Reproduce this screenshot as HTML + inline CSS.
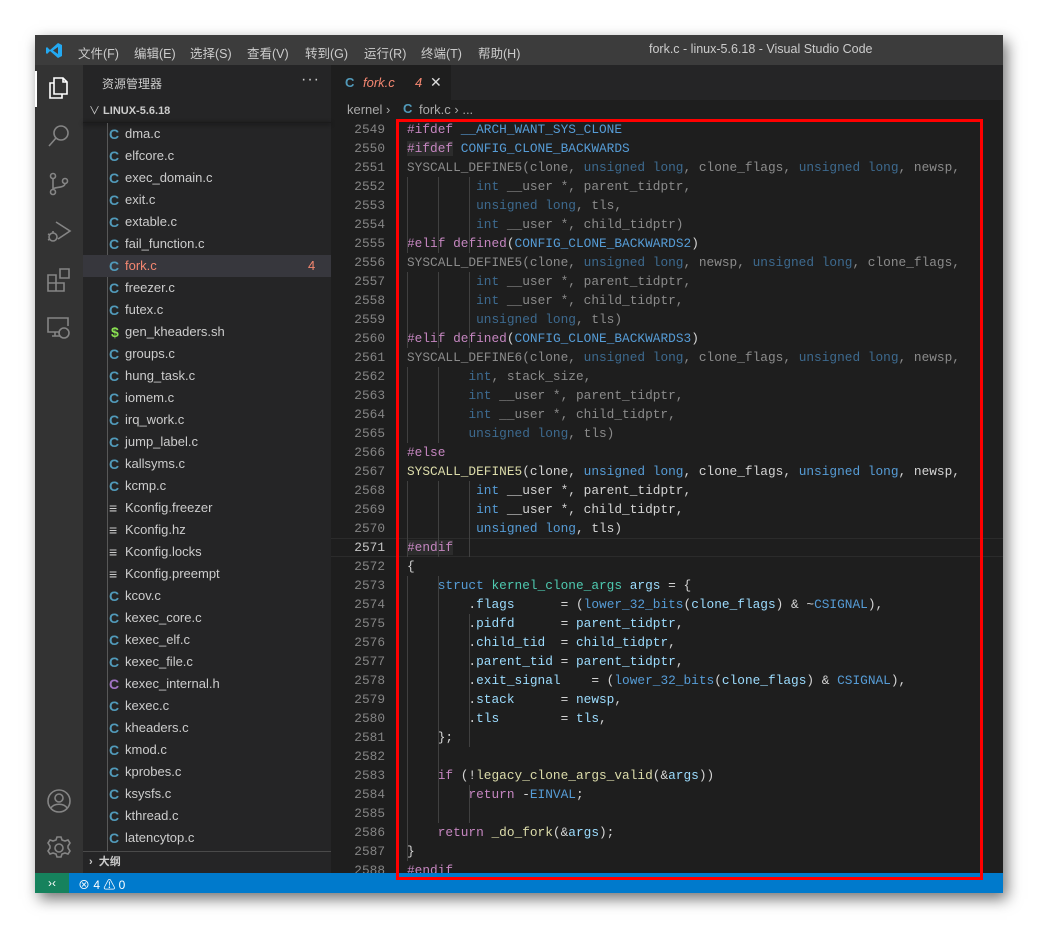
<!DOCTYPE html>
<html><head><meta charset="utf-8"><style>
*{margin:0;padding:0;box-sizing:border-box}
body{width:1038px;height:930px;background:#fff;position:relative;overflow:hidden;font-family:"Liberation Sans","Noto Sans CJK SC",sans-serif}
#win{position:absolute;left:35px;top:35px;width:968px;height:858px;background:#1e1e1e;box-shadow:4px 6px 14px rgba(0,0,0,.55);overflow:hidden}
.abs{position:absolute}
#title{left:0;top:0;width:968px;height:30px;background:#3c3c3c;color:#ccc;font-size:12.5px}
#title span{position:absolute;top:8px}
#act{left:0;top:30px;width:48px;height:808px;background:#333}
#side{left:48px;top:30px;width:248px;height:808px;background:#252526;color:#ccc;font-size:13px}
.f{position:absolute;left:0;width:248px;height:22px;line-height:22px}
.f i{position:absolute;left:26px;font-style:normal;font-weight:bold;font-size:14px;color:#519aba}
.f b{position:absolute;left:42px;font-weight:normal}
#tabs{left:296px;top:30px;width:672px;height:35px;background:#252526}
#crumb{left:296px;top:65px;width:672px;height:20px;color:#a9a9a9;font-size:13px}
#code{left:296px;top:85px;width:672px;height:753px;font-family:"Liberation Mono",monospace;font-size:12.8px;color:#d4d4d4}
.l{height:19px;line-height:19px;white-space:pre;position:relative}
.n{position:absolute;left:0;width:54px;text-align:right;color:#858585}
.c{position:absolute;left:76px}
.p{color:#c586c0}.m{color:#569cd6}.k{color:#569cd6}.fn{color:#dcdcaa}.t{color:#4ec9b0}.v{color:#9cdcfe}
.d{color:#8b8b8b}.d .k{color:#3d6a8f}.d .m{color:#3d6a8f}
.g{position:absolute;top:0;width:1px;height:19px;background:#404040}
#status{left:0;top:838px;width:968px;height:20px;background:#007acc;color:#fff;font-size:12px}
</style></head><body>
<div id="win">
<div id="title" class="abs">
<svg class="abs" style="left:10px;top:7px" width="18" height="17" viewBox="0 0 18 17"><path d="M13 1 L17 3 V14 L13 16 L5 9 L2 12 L1 11 V6 L2 5 L5 8 Z M13 5 L8 8.5 L13 12 Z" fill="#23a9f2"/></svg>
<span style="left:43px">文件(F)</span><span style="left:99px">编辑(E)</span><span style="left:155px">选择(S)</span><span style="left:212px">查看(V)</span><span style="left:270px">转到(G)</span><span style="left:329px">运行(R)</span><span style="left:386px">终端(T)</span><span style="left:443px">帮助(H)</span>
<span style="left:614px;font-size:12.5px;top:7px">fork.c - linux-5.6.18 - Visual Studio Code</span>
</div>
<div id="act" class="abs">
<div class="abs" style="left:0;top:6px;width:2px;height:36px;background:#fff"></div>
<svg class="abs" style="left:11px;top:10px" width="26" height="26" viewBox="0 0 26 26" fill="none" stroke="#fff" stroke-width="1.6"><path d="M8 3h9l4 4v12H8z M17 3v4h4"/><path d="M8 8H4v15h12v-4"/></svg>
<svg class="abs" style="left:11px;top:58px" width="26" height="26" viewBox="0 0 26 26" fill="none" stroke="#858585" stroke-width="1.6"><circle cx="15" cy="10" r="7"/><path d="M10 15 L3 23"/></svg>
<svg class="abs" style="left:11px;top:106px" width="26" height="26" viewBox="0 0 26 26" fill="none" stroke="#858585" stroke-width="1.6"><circle cx="7" cy="5" r="2.5"/><circle cx="7" cy="21" r="2.5"/><circle cx="19" cy="10" r="2.5"/><path d="M7 7.5v11 M19 12.5c0 5-12 3-12 6"/></svg>
<svg class="abs" style="left:11px;top:154px" width="26" height="26" viewBox="0 0 26 26" fill="none" stroke="#858585" stroke-width="1.6"><path d="M10 3 L24 12 L12 20"/><circle cx="7" cy="18" r="4"/><path d="M2 15l2 1M2 21l2-1M7 14v-2"/></svg>
<svg class="abs" style="left:11px;top:202px" width="26" height="26" viewBox="0 0 26 26" fill="none" stroke="#858585" stroke-width="1.6"><path d="M2 8h8v8h8v8H2z M2 16h8v8 M14 2h9v9h-9z"/></svg>
<svg class="abs" style="left:11px;top:250px" width="26" height="26" viewBox="0 0 26 26" fill="none" stroke="#858585" stroke-width="1.6"><path d="M14 17H2V3h20v8 M6 21h8 M9 17v4"/><circle cx="18" cy="18" r="5"/></svg>
<svg class="abs" style="left:11px;top:723px" width="26" height="26" viewBox="0 0 26 26" fill="none" stroke="#858585" stroke-width="1.6"><circle cx="13" cy="13" r="11"/><circle cx="13" cy="10" r="4"/><path d="M5 20c3-5 13-5 16 0"/></svg>
<svg class="abs" style="left:11px;top:770px" width="26" height="26" viewBox="0 0 26 26" fill="none" stroke="#858585" stroke-width="1.6"><circle cx="13" cy="13" r="4"/><path d="M11 2h4l1 3 3 1 3-1 2 3-2 3v2l2 3-2 3-3-1-3 1-1 3h-4l-1-3-3-1-3 1-2-3 2-3v-2L2 8l2-3 3 1 3-1z"/></svg>
</div>
<div id="side" class="abs">
<div class="abs" style="left:19px;top:10px;font-size:12px">资源管理器</div>
<div class="abs" style="left:218px;top:10px;font-size:16px;letter-spacing:1px;line-height:10px">···</div>
<div class="abs" style="left:6px;top:37px;font-size:11px;font-weight:bold"><span style="font-weight:normal">&#8744;</span> LINUX-5.6.18</div>
<div class="abs" style="left:0;top:57px;width:248px;height:1px;background:#1b1b1b;box-shadow:0 1px 4px #000"></div>
<div class="abs" style="left:24px;top:58px;width:1px;height:760px;background:#585858"></div>
<div class="f" style="top:58px"><i>C</i><b>dma.c</b></div>
<div class="f" style="top:80px"><i>C</i><b>elfcore.c</b></div>
<div class="f" style="top:102px"><i>C</i><b>exec_domain.c</b></div>
<div class="f" style="top:124px"><i>C</i><b>exit.c</b></div>
<div class="f" style="top:146px"><i>C</i><b>extable.c</b></div>
<div class="f" style="top:168px"><i>C</i><b>fail_function.c</b></div>
<div class="f" style="top:190px;background:#37373d"><i>C</i><b style="color:#f48771">fork.c</b><span style="position:absolute;left:225px;color:#f48771">4</span></div>
<div class="f" style="top:212px"><i>C</i><b>freezer.c</b></div>
<div class="f" style="top:234px"><i>C</i><b>futex.c</b></div>
<div class="f" style="top:256px"><i style="color:#89e051;left:28px">$</i><b>gen_kheaders.sh</b></div>
<div class="f" style="top:278px"><i>C</i><b>groups.c</b></div>
<div class="f" style="top:300px"><i>C</i><b>hung_task.c</b></div>
<div class="f" style="top:322px"><i>C</i><b>iomem.c</b></div>
<div class="f" style="top:344px"><i>C</i><b>irq_work.c</b></div>
<div class="f" style="top:366px"><i>C</i><b>jump_label.c</b></div>
<div class="f" style="top:388px"><i>C</i><b>kallsyms.c</b></div>
<div class="f" style="top:410px"><i>C</i><b>kcmp.c</b></div>
<div class="f" style="top:432px"><i style="color:#ccc;font-weight:normal">&#8801;</i><b>Kconfig.freezer</b></div>
<div class="f" style="top:454px"><i style="color:#ccc;font-weight:normal">&#8801;</i><b>Kconfig.hz</b></div>
<div class="f" style="top:476px"><i style="color:#ccc;font-weight:normal">&#8801;</i><b>Kconfig.locks</b></div>
<div class="f" style="top:498px"><i style="color:#ccc;font-weight:normal">&#8801;</i><b>Kconfig.preempt</b></div>
<div class="f" style="top:520px"><i>C</i><b>kcov.c</b></div>
<div class="f" style="top:542px"><i>C</i><b>kexec_core.c</b></div>
<div class="f" style="top:564px"><i>C</i><b>kexec_elf.c</b></div>
<div class="f" style="top:586px"><i>C</i><b>kexec_file.c</b></div>
<div class="f" style="top:608px"><i style="color:#a074c4">C</i><b>kexec_internal.h</b></div>
<div class="f" style="top:630px"><i>C</i><b>kexec.c</b></div>
<div class="f" style="top:652px"><i>C</i><b>kheaders.c</b></div>
<div class="f" style="top:674px"><i>C</i><b>kmod.c</b></div>
<div class="f" style="top:696px"><i>C</i><b>kprobes.c</b></div>
<div class="f" style="top:718px"><i>C</i><b>ksysfs.c</b></div>
<div class="f" style="top:740px"><i>C</i><b>kthread.c</b></div>
<div class="f" style="top:762px"><i>C</i><b>latencytop.c</b></div>
<div class="abs" style="left:0;top:786px;width:248px;height:22px;background:#252526;border-top:1px solid #4a4a4a;line-height:21px;font-size:11px;font-weight:bold;padding-left:6px">&#8250;&nbsp; 大纲</div>
</div>
<div id="tabs" class="abs">
<div class="abs" style="left:0;top:0;width:120px;height:35px;background:#1e1e1e;font-size:13px;line-height:35px">
<span style="position:absolute;left:14px;color:#519aba;font-weight:bold">C</span>
<span style="position:absolute;left:32px;color:#f48771;font-style:italic">fork.c</span>
<span style="position:absolute;left:84px;color:#f48771;font-style:italic">4</span>
<span style="position:absolute;left:99px;color:#ddd;font-size:14px">&#10005;</span></div>
</div>
<div id="crumb" class="abs"><span style="position:absolute;left:16px;top:2px">kernel &#8250;</span><span style="position:absolute;left:72px;top:1px;color:#519aba;font-weight:bold">C</span><span style="position:absolute;left:88px;top:2px">fork.c &#8250; ...</span></div>
<div id="code" class="abs">
<div class="l"><span class="n">2549</span><span class="c"><span class="p">#ifdef</span> <span class="m">__ARCH_WANT_SYS_CLONE</span></span></div>
<div class="l"><span class="n">2550</span><span class="c"><span class="p" style="background:#2c2c2c">#ifdef</span> <span class="m">CONFIG_CLONE_BACKWARDS</span></span></div>
<div class="l d"><span class="n">2551</span><span class="c">SYSCALL_DEFINE5(clone, <span class="k">unsigned</span> <span class="k">long</span>, clone_flags, <span class="k">unsigned</span> <span class="k">long</span>, newsp,</span></div>
<div class="l d"><span class="n">2552</span><span class="c">         <span class="k">int</span> __user *, parent_tidptr,</span></div>
<div class="l d"><span class="n">2553</span><span class="c">         <span class="k">unsigned</span> <span class="k">long</span>, tls,</span></div>
<div class="l d"><span class="n">2554</span><span class="c">         <span class="k">int</span> __user *, child_tidptr)</span></div>
<div class="l"><span class="n">2555</span><span class="c"><span class="p">#elif</span> <span class="p">defined</span>(<span class="m">CONFIG_CLONE_BACKWARDS2</span>)</span></div>
<div class="l d"><span class="n">2556</span><span class="c">SYSCALL_DEFINE5(clone, <span class="k">unsigned</span> <span class="k">long</span>, newsp, <span class="k">unsigned</span> <span class="k">long</span>, clone_flags,</span></div>
<div class="l d"><span class="n">2557</span><span class="c">         <span class="k">int</span> __user *, parent_tidptr,</span></div>
<div class="l d"><span class="n">2558</span><span class="c">         <span class="k">int</span> __user *, child_tidptr,</span></div>
<div class="l d"><span class="n">2559</span><span class="c">         <span class="k">unsigned</span> <span class="k">long</span>, tls)</span></div>
<div class="l"><span class="n">2560</span><span class="c"><span class="p">#elif</span> <span class="p">defined</span>(<span class="m">CONFIG_CLONE_BACKWARDS3</span>)</span></div>
<div class="l d"><span class="n">2561</span><span class="c">SYSCALL_DEFINE6(clone, <span class="k">unsigned</span> <span class="k">long</span>, clone_flags, <span class="k">unsigned</span> <span class="k">long</span>, newsp,</span></div>
<div class="l d"><span class="n">2562</span><span class="c">        <span class="k">int</span>, stack_size,</span></div>
<div class="l d"><span class="n">2563</span><span class="c">        <span class="k">int</span> __user *, parent_tidptr,</span></div>
<div class="l d"><span class="n">2564</span><span class="c">        <span class="k">int</span> __user *, child_tidptr,</span></div>
<div class="l d"><span class="n">2565</span><span class="c">        <span class="k">unsigned</span> <span class="k">long</span>, tls)</span></div>
<div class="l"><span class="n">2566</span><span class="c"><span class="p">#else</span></span></div>
<div class="l"><span class="n">2567</span><span class="c"><span class="fn">SYSCALL_DEFINE5</span>(clone, <span class="k">unsigned</span> <span class="k">long</span>, clone_flags, <span class="k">unsigned</span> <span class="k">long</span>, newsp,</span></div>
<div class="l"><span class="n">2568</span><span class="c">         <span class="k">int</span> __user *, parent_tidptr,</span></div>
<div class="l"><span class="n">2569</span><span class="c">         <span class="k">int</span> __user *, child_tidptr,</span></div>
<div class="l"><span class="n">2570</span><span class="c">         <span class="k">unsigned</span> <span class="k">long</span>, tls)</span></div>
<div class="l" style="box-shadow:inset 0 1px #2b2b2b,inset 0 -1px #2b2b2b"><span class="n" style="color:#c6c6c6">2571</span><span class="c"><span class="p" style="background:#2c2c2c">#endif</span></span></div>
<div class="l"><span class="n">2572</span><span class="c">{</span></div>
<div class="l"><span class="n">2573</span><span class="c">    <span class="k">struct</span> <span class="t">kernel_clone_args</span> <span class="v">args</span> = {</span></div>
<div class="l"><span class="n">2574</span><span class="c">        .<span class="v">flags</span>      = (<span class="m">lower_32_bits</span>(<span class="v">clone_flags</span>) &amp; ~<span class="m">CSIGNAL</span>),</span></div>
<div class="l"><span class="n">2575</span><span class="c">        .<span class="v">pidfd</span>      = <span class="v">parent_tidptr</span>,</span></div>
<div class="l"><span class="n">2576</span><span class="c">        .<span class="v">child_tid</span>  = <span class="v">child_tidptr</span>,</span></div>
<div class="l"><span class="n">2577</span><span class="c">        .<span class="v">parent_tid</span> = <span class="v">parent_tidptr</span>,</span></div>
<div class="l"><span class="n">2578</span><span class="c">        .<span class="v">exit_signal</span>    = (<span class="m">lower_32_bits</span>(<span class="v">clone_flags</span>) &amp; <span class="m">CSIGNAL</span>),</span></div>
<div class="l"><span class="n">2579</span><span class="c">        .<span class="v">stack</span>      = <span class="v">newsp</span>,</span></div>
<div class="l"><span class="n">2580</span><span class="c">        .<span class="v">tls</span>        = <span class="v">tls</span>,</span></div>
<div class="l"><span class="n">2581</span><span class="c">    };</span></div>
<div class="l"><span class="n">2582</span><span class="c"></span></div>
<div class="l"><span class="n">2583</span><span class="c">    <span class="p">if</span> (!<span class="fn">legacy_clone_args_valid</span>(&amp;<span class="v">args</span>))</span></div>
<div class="l"><span class="n">2584</span><span class="c">        <span class="p">return</span> -<span class="m">EINVAL</span>;</span></div>
<div class="l"><span class="n">2585</span><span class="c"></span></div>
<div class="l"><span class="n">2586</span><span class="c">    <span class="p">return</span> <span class="fn">_do_fork</span>(&amp;<span class="v">args</span>);</span></div>
<div class="l"><span class="n">2587</span><span class="c">}</span></div>
<div class="l"><span class="n">2588</span><span class="c"><span class="p">#endif</span></span></div>
<div class="g" style="left:76px;top:456px;height:285px"></div>
<div class="g" style="left:107px;top:456px;height:247px"></div>
<div class="g" style="left:138px;top:494px;height:133px"></div>
<div class="g" style="left:138px;top:665px;height:38px"></div>
<div class="g" style="left:76px;top:57px;height:76px"></div><div class="g" style="left:107px;top:57px;height:76px"></div><div class="g" style="left:138px;top:57px;height:76px"></div>
<div class="g" style="left:76px;top:152px;height:76px"></div><div class="g" style="left:107px;top:152px;height:76px"></div><div class="g" style="left:138px;top:152px;height:76px"></div>
<div class="g" style="left:76px;top:247px;height:76px"></div><div class="g" style="left:107px;top:247px;height:76px"></div>
<div class="g" style="left:76px;top:361px;height:76px"></div><div class="g" style="left:107px;top:361px;height:76px"></div><div class="g" style="left:138px;top:361px;height:76px"></div>
</div>
<div id="status" class="abs">
<div class="abs" style="left:0;top:0;width:34px;height:20px;background:#16825d;text-align:center;line-height:20px;font-size:12px">&#8250;&#8249;</div>
<div class="abs" style="left:43px;top:3px">&#8855; 4 &#9888; 0</div>
</div>
</div>
<div class="abs" style="left:396px;top:119px;width:587px;height:761px;border:3px solid #ff0000"></div>
</body></html>
